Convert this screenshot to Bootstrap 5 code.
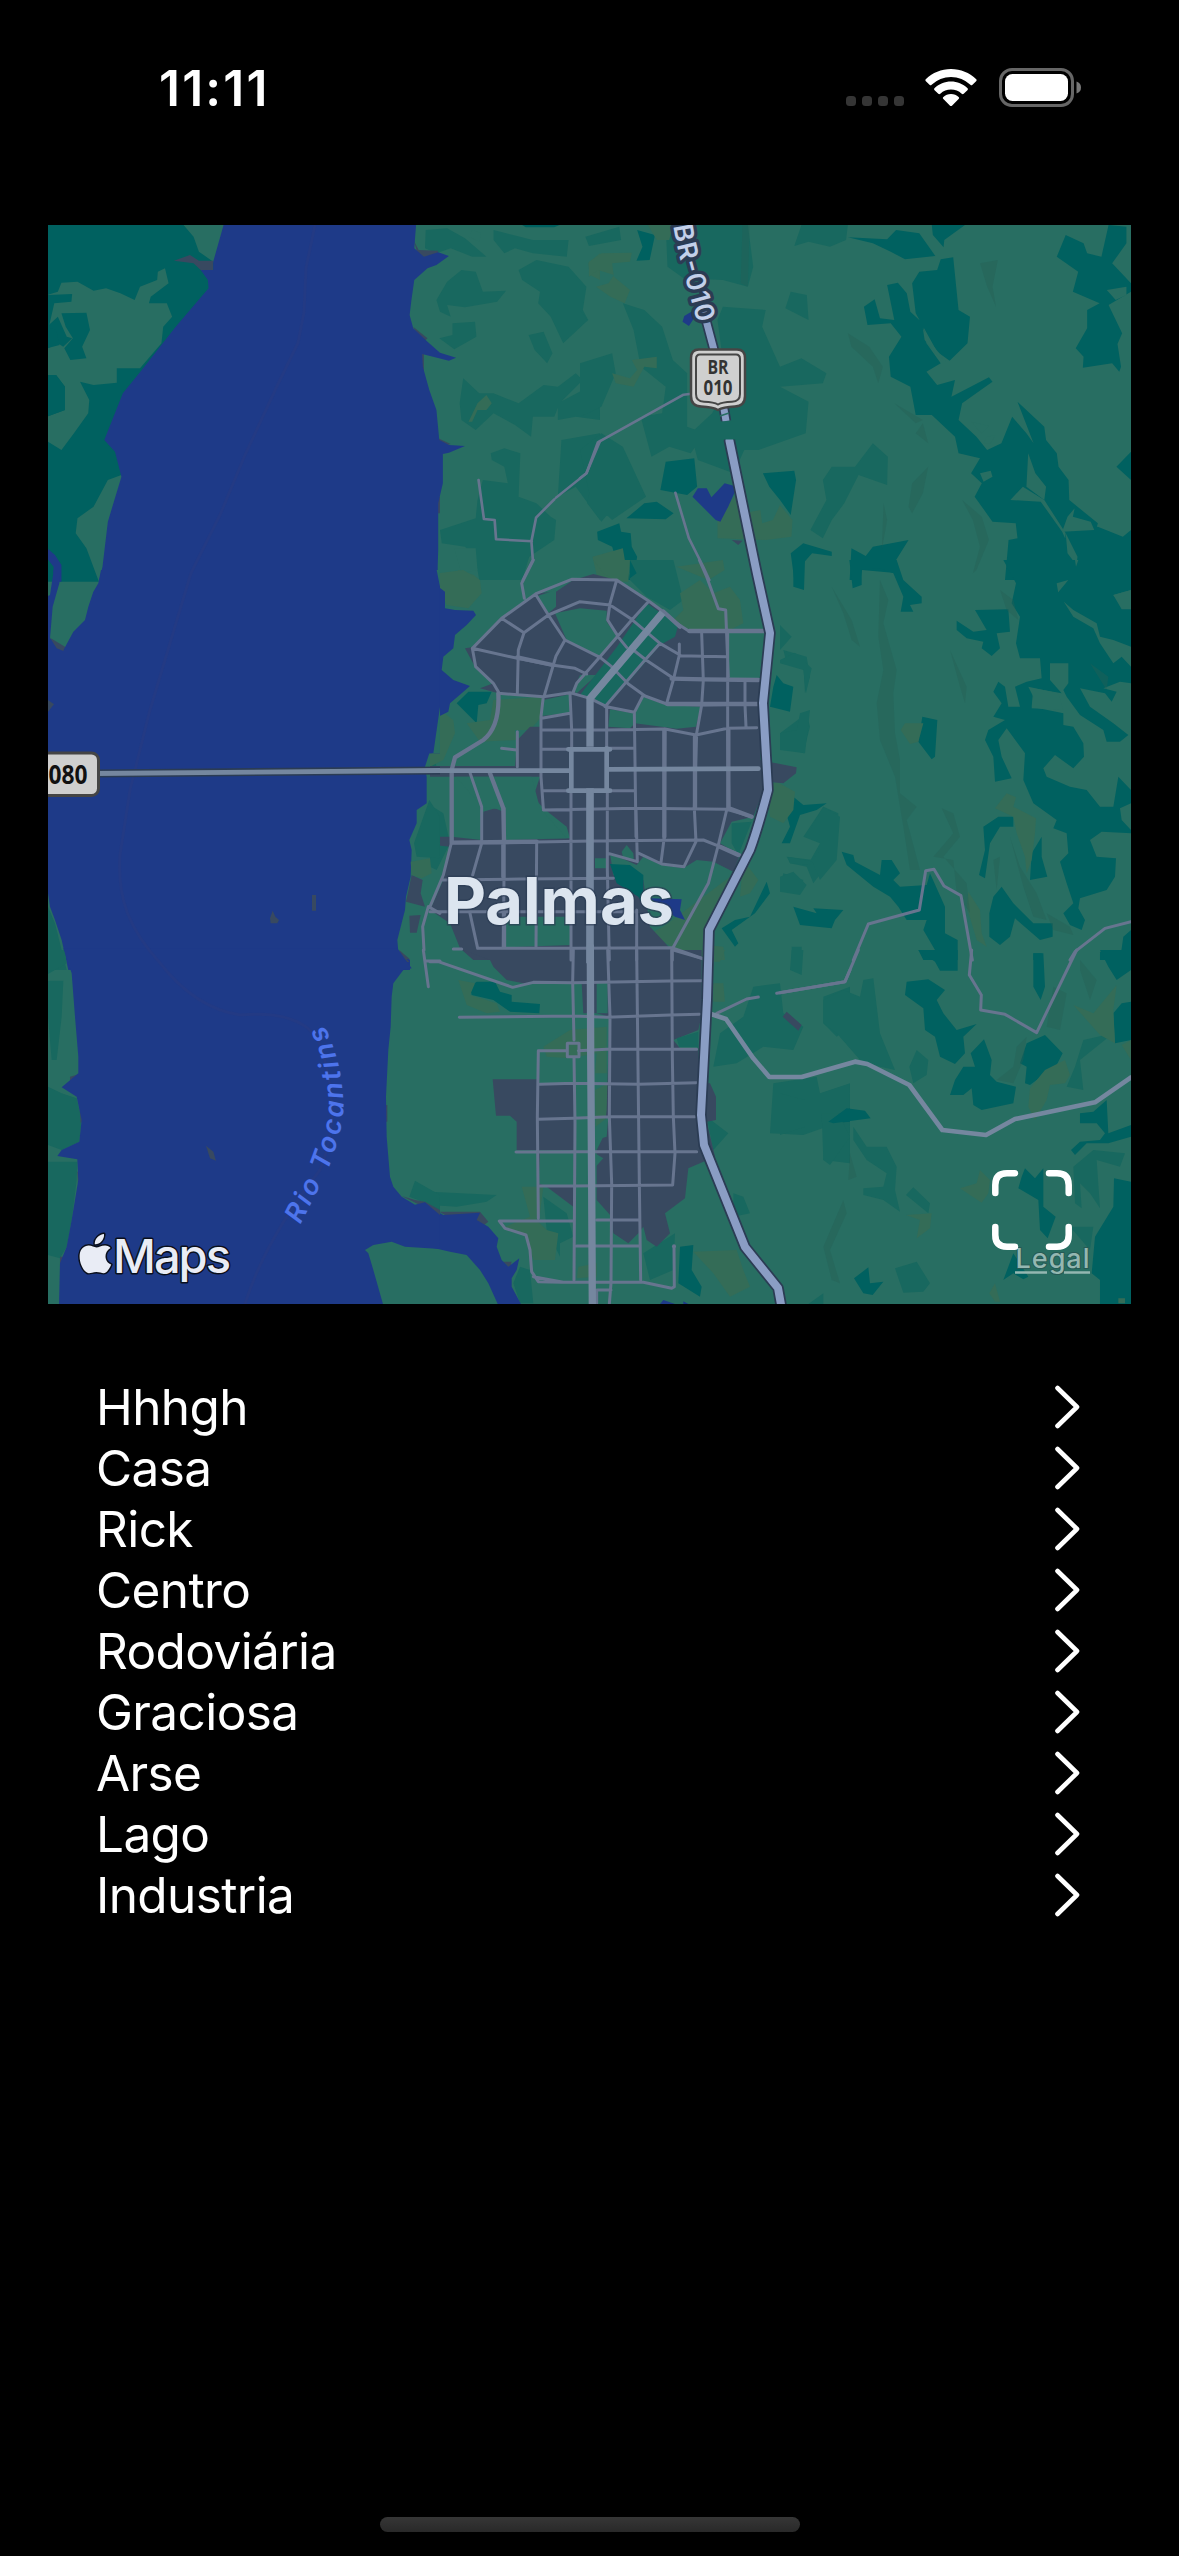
<!DOCTYPE html>
<html lang="pt-BR" data-bs-theme="dark">
<head>
<meta charset="utf-8">
<meta name="viewport" content="width=device-width, initial-scale=1">
<title>Palmas</title>
<link href="https://cdn.jsdelivr.net/npm/bootstrap@5.3.0/dist/css/bootstrap.min.css" rel="stylesheet">
<style>
  body{background:#000;color:#fff;font-family:Inter,"Liberation Sans",sans-serif}
  .screen{width:1179px;height:2556px;overflow:hidden}
  .statusbar{height:225px;padding:68px 98px 0 159px}
  .clock{font-size:49.5px;font-weight:600;line-height:40px;letter-spacing:2.2px}
  .mapbox{width:1083px;height:1079px;margin-left:48px}
  .mapbox>svg{display:block}
  .expand{right:59px;bottom:54px;width:80px;height:80px}
  .places{margin-top:72.500px;padding:0 96px}
  .place{height:61px;background:transparent;color:#fff;border:0;font-size:49.5px;line-height:61px;letter-spacing:-.6px;padding:0 3px 0 0}
  .homebar{width:420px;height:15px;border-radius:8px;background:linear-gradient(#363636,#292929);margin-bottom:24px}
  .w{fill:#1e3a88}.d{fill:#006160}.m{fill:#18685f}.g{fill:#286e62}.o{fill:#346c57}.u{fill:#384960}.s{fill:#265f55;opacity:.4}
  .r,.a,.h,.hc{fill:none;stroke-linejoin:round;stroke-linecap:round}
  .r{stroke:#67758f;stroke-width:9}.a{stroke:#75879f;stroke-width:14}
  .h{stroke:#8a9dc4;stroke-width:22}.hc{stroke:#2b3c54;stroke-width:33}
  .thin{stroke-width:7.5}.fat{stroke-width:13}
</style>
</head>
<body>
<main class="screen d-flex flex-column">
  <header class="statusbar d-flex justify-content-between align-items-start">
    <div class="clock">11:11</div>
    <svg width="236" height="40" viewBox="845 68 236 40">
      <g fill="#353535"><rect x="846" y="96" width="10" height="10" rx="3.5"/><rect x="862" y="96" width="10" height="10" rx="3.5"/><rect x="878" y="96" width="10" height="10" rx="3.5"/><rect x="894" y="96" width="10" height="10" rx="3.5"/></g>
      <g fill="#fff"><path d="M951 69c9.700 0 18.500 3.800 25 10 .8.800.8 1.500.1 2.200l-3.600 3.500c-.7.700-1.400.7-2.100 0a28 28 0 0 0-38.800 0c-.7.700-1.400.7-2.100 0l-3.600-3.500c-.7-.7-.7-1.400.1-2.200 6.500-6.200 15.300-10 25-10z"/><path d="M951 81.500c6.200 0 12 2.400 16.300 6.500.8.700.8 1.500.1 2.200l-3.700 3.600c-.7.700-1.300.6-2 0a15.700 15.700 0 0 0-21.400 0c-.7.600-1.300.7-2 0l-3.700-3.600c-.7-.7-.7-1.500.1-2.200 4.300-4.100 10.100-6.500 16.300-6.500z"/><path d="M951 94c3 0 5.600 1.200 7.600 3 .7.700.7 1.300 0 2l-6.400 6.400c-.8.800-1.600.8-2.400 0L943.400 99c-.7-.7-.7-1.300 0-2 2-1.800 4.600-3 7.600-3z"/></g>
      <rect x="1000.500" y="69.500" width="72" height="36" rx="11.500" fill="none" stroke="#666" stroke-width="3"/>
      <rect x="1005" y="74" width="63" height="27" rx="7.500" fill="#fff"/><path d="M1076.500 81.500q4.500 1.500 4.500 6t-4.500 6z" fill="#777"/>
    </svg>
  </header>

  <section class="mapbox position-relative overflow-hidden flex-shrink-0">
  <svg width="1083" height="1079" viewBox="48 225 1083 1079">
    <rect class="g" x="48" y="225" width="1083" height="1079"/>
    <!-- terrain, north-west -->
    <g transform="translate(40 220) scale(.35714 .33333)">
      <path class="d" d="M0 0H390L430 50 445 95 485 125 520 205 300 500 240 700 228 765 190 780 150 860 105 895 100 940 130 985 165 1085H0V650L60 690 95 640 135 580 138 540 112 485 150 495 215 488V445H280L340 370 345 320 370 290 355 250 305 250 310 230 360 190 350 145 330 155 328 180 280 200 265 240 225 220 185 205 150 212 105 185 60 188 50 215 20 225V320L50 290 75 350 90 355 65 380 50 370 22 385V465H45L70 500V570L20 590V0Z"/>
      <path class="d" d="M20 225L90 222 88 245 40 250 25 320H10ZM60 280L130 278 140 330 118 380 130 415 85 420 68 385 92 355 72 320ZM20 320L45 330 55 375 20 385ZM20 465L45 465 70 500V570L20 590Z"/>
      <path class="m" d="M1080 30L1140 25 1190 55 1250 110 1210 110 1150 85 1110 100 1078 85ZM1110 240L1140 185 1180 150 1220 155 1240 215 1305 212 1280 245 1190 262 1140 255 1150 290 1120 275ZM1155 310L1218 305 1222 350 1160 388 1118 355 1155 345ZM1270 30L1380 60 1480 60 1475 110 1380 100 1330 85 1300 100 1270 60ZM1340 150L1390 120 1480 140 1530 200 1520 270 1535 300 1465 370 1430 290 1395 250 1400 215 1350 180ZM1368 345L1410 335 1435 400 1420 430 1385 390ZM1185 475L1230 520 1270 520 1340 550 1410 495 1450 500 1500 460 1520 480 1455 550 1440 590 1380 590 1375 650 1330 615 1270 580 1220 630 1180 600 1175 550ZM1262 700L1300 685 1345 700 1340 830 1390 850 1430 890 1445 900 1440 960 1370 1010 1350 1080 1230 1080 1220 1020 1190 980 1125 970 1120 930 1220 895 1225 840 1240 780 1310 790 1300 740 1265 720ZM1460 660L1568 640V900L1500 800 1450 830ZM1450 550L1520 510 1568 560V600L1500 590 1450 600Z"/>
      <path class="g" d="M1210 30L1235 40 1230 65 1200 50ZM1160 985L1220 985 1225 1050 1180 1060Z"/>
      <path class="o" d="M1200 605L1225 550 1250 525 1265 550 1250 570 1225 570 1210 605ZM1535 130L1568 100V180L1540 165ZM1170 1050L1215 1065 1230 1080H1175ZM1550 1010H1568V1050Z"/>
      <path class="d" d="M1350 15H1455L1440 22H1360Z"/>
    </g>
    <!-- terrain, north-east -->
    <g transform="translate(580 220) scale(.35714 .33333)">
      <path class="m" d="M15 50L110 20 115 60 25 78ZM240 15H470L485 140 470 200 400 180 290 175 245 140ZM620 15H750L745 60 700 80 640 65 600 78ZM590 215L635 225 640 300 575 265ZM120 250L180 270 230 320 260 420 300 460V620L350 640 310 700 250 680 200 710 170 590 230 580 240 500 170 440 150 330ZM400 260L520 270 510 320 560 440 620 415 690 460 680 490 560 500 640 545 632 640 500 690 460 690 430 760 330 720 310 640 370 580 410 500 385 300ZM0 430L90 400 100 460 60 560 0 590ZM0 690L60 640 120 680 185 830 90 900 30 840ZM820 670L862 710 860 795 780 765 740 850 705 900 680 955 645 930 690 840 680 780 705 740 770 740ZM0 270L20 300H0ZM30 800L80 880 60 905 20 850Z"/>
      <path class="d" d="M160 30L210 45 195 120 158 122 175 80ZM750 52L860 58 885 30 950 40 995 108 910 118 870 95 820 70ZM985 15H1078L1020 60 1018 82 988 45ZM1010 118L1045 112 1060 270 1092 290 1085 370 1035 422 1000 395 940 280 930 190 950 155 1000 150ZM860 195L890 188 915 220 925 275 960 310 970 370 1010 430 970 455 1000 495 1050 480 1040 530 1145 472 1155 485 1070 550 1060 600 1110 650 1140 690 1180 670 1210 590 1250 640 1270 670 1225 545 1300 620 1305 660 1335 700 1340 740 1368 780 1370 840 1450 910 1445 930 1360 940 1300 840 1240 800 1205 840 1290 845 1350 935 1390 1030 1385 1080H1190L1200 960 1225 955 1220 910 1155 905 1105 830 1125 790 1095 760 1120 715 1060 700 1050 650 985 585H940L925 500 870 470 865 410 900 350 870 310 805 315 795 260 825 238 840 295 880 300ZM1360 45L1410 70 1420 100 1460 110 1480 15 1530 20 1530 70 1490 130 1543 190V215L1480 255 1518 340 1505 372 1515 440 1510 455 1490 430 1408 443 1410 410 1388 385 1420 325V270L1455 250 1380 215 1395 155 1335 110ZM240 725L320 715 328 800 300 825 225 810ZM130 895L180 850 215 845 262 880 240 898ZM512 760L600 752 605 780 590 885 560 840 530 800ZM48 935L110 910 115 935 142 940 145 980 160 1010 150 1080H120L90 980 50 960ZM590 1000L625 970 705 995V1008L650 1000 625 1030 625 1080H600ZM760 985L800 1008 820 980 920 960 885 1020 890 1060 790 1050 785 1080H755ZM1360 935L1450 920 1520 950 1543 930V1080H1350ZM1543 695L1502 740 1543 780Z"/>
      <path class="g" d="M1365 890L1385 865 1380 890 1430 905 1440 930 1350 935ZM1255 700L1275 760 1305 800 1300 840 1250 800ZM1475 210L1530 200 1530 225 1500 240ZM960 325L980 365 1025 425 1000 405 965 360ZM1120 760L1150 752 1155 770 1130 785ZM1360 940L1393 1010 1390 1035 1365 1000ZM1095 605L1145 618 1125 640ZM1140 650L1163 645 1150 670 1130 670Z"/>
      <path class="o" d="M190 15H260L250 60 215 60ZM25 125L60 100 145 98 140 125 90 130 95 170 140 210 125 250 85 230 45 200 80 190 95 165 50 150 25 170ZM145 420L215 410 215 445 180 440 150 500 100 490 90 460 140 475 160 450ZM440 820L455 880 505 870 510 910 540 900 560 855 595 900 592 950 520 960 385 955 385 890ZM35 1010L120 985 135 1080H50ZM270 1040L400 1020 405 1050 360 1080Z"/>
      <path class="w" d="M320 270L322 290 305 318 287 305 292 288ZM315 830L330 805 355 805 368 832 405 790 440 800 415 860 393 905 380 900Z"/>
      <path class="u" d="M425 960L455 962 443 975Z"/>
      <path class="s" d="M750 340L810 380 848 440 835 490 820 440 760 380ZM1120 130L1170 120 1155 200 1165 260 1140 200ZM880 550L960 600 940 610ZM930 790L975 740 960 820 930 880 920 860ZM1070 840L1125 890 1145 960 1110 1050 1100 1060 1120 980 1100 900ZM960 610L975 670 940 640ZM850 850L860 900 845 990ZM455 15H475L470 200 450 190Z"/>
    </g>
    <!-- terrain around the city -->
    <g transform="translate(430 560) scale(.33333)">
      <path class="m" d="M590 0H730L745 60 760 120 720 150 650 110 600 60ZM330 110L400 90 380 140 350 150ZM1060 270L1130 290 1140 350 1125 400 1120 310 1070 310ZM1050 520L1130 460 1140 500 1120 580 1060 560ZM1180 740L1225 760 1220 860 1180 930 1150 970 1130 920 1170 850 1120 830ZM0 735L40 760 60 850 20 930 0 920ZM1070 890L1150 900 1130 920 1080 910ZM1060 940L1120 960 1110 1000 1050 990ZM0 560L20 620H0Z"/>
      <path class="d" d="M600 0L620 40 600 55ZM1090 0H1125L1122 90 1090 80ZM1040 345L1060 370 1090 380 1080 455 1020 440 1030 380ZM80 430L115 395 185 395 170 430 145 435 140 490ZM1065 745L1090 710 1120 735 1190 730 1160 750 1110 765 1080 850 1055 850 1080 800ZM875 1105L915 1080 960 1070 1010 965 1020 1000 975 1060 905 1110 925 1150 915 1160ZM1090 1040L1160 1060 1150 1045 1240 1050 1215 1080 1205 1105 1110 1095Z"/>
      <path class="o" d="M490 0H600L595 65 560 65 520 40ZM25 40L100 30 150 60 155 100 115 145 50 135 30 95ZM750 100L810 60 850 100 900 80 930 120 940 190 900 210 770 210 730 180 760 150ZM190 420L340 410 335 470 300 510 255 510 260 540 150 545 110 490 180 480ZM30 450L70 480 75 520 40 600 0 620V560L20 480ZM1010 680L1040 665 1095 695 1090 750 1060 790 1020 770ZM940 900L985 960 960 1000 930 1010ZM700 1100L900 950 830 1100 820 1200 730 1165 660 1120ZM830 1155L880 1160 885 1200H840Z"/>
      <path class="u" d="M320 100L378 95 430 60 490 42 560 60 700 150 775 212 890 212 898 355H990V600L1100 622 1098 640 1060 670 1010 665 970 770 905 785 870 850 930 885 910 935 850 905 800 900 760 925 695 915 640 890 620 915 540 880 550 945 640 960 660 1100 720 1165 830 1200H130L90 1165 60 1090 0 1050 40 960 60 860 12 855 15 830 65 830 155 840 160 755 195 745 220 755 225 840 420 835 410 800 340 745 310 710 330 650H0V618H255L262 540 300 500H330L340 410 205 400 150 385 190 370 135 320 105 265 125 262 210 175Z"/>
      <path class="d" d="M540 912L600 915 640 945 640 1035 625 1010 560 970Z"/>
      <path class="g" d="M322 108L378 90 378 140 355 160ZM375 160L450 145 530 152 530 185 565 235 510 290 410 240ZM340 420L420 403 425 458 335 468ZM540 448L612 460 640 410 705 434 812 440 798 500 740 506 615 490 600 505 535 500ZM78 650H305L330 745 410 835H232L222 750 155 740ZM228 1070H425V1155L228 1162ZM495 895H530V925H495ZM575 875L590 855 610 880 612 905 580 895ZM450 345L500 345 440 400 430 390Z"/>
      <path class="m" d="M650 130L745 195 735 230 690 255 600 360 530 438 480 410 450 405 560 262ZM905 790L965 785 925 885 905 850Z"/>
      <path class="w" d="M-5 0H20L25 80 45 95V145L75 150 130 152 138 165 110 195 75 225 70 265 40 290 35 330 70 360 120 378 95 400 60 430 55 455 25 470 15 500 10 550 5 580H-5ZM660 1015L755 1018 750 1050 765 1080 735 1070Z"/>
    </g>
    <!-- terrain, east -->
    <g transform="translate(780 560) scale(.33333)">
      <path class="d" d="M208 0H350L370 60 425 110 425 130 390 135 400 155H362L370 110 340 40 300 25 245 30V75L218 85ZM670 0H1053V90L1000 105 1030 145 1053 145V260L1000 240 960 230 950 190 880 150 828 105 865 60 830 70 835 100 880 170 940 205 960 250 1000 310 1025 290 1053 320V370L1020 365 970 385 1010 395 995 425 975 400 900 385 930 440 1000 490 1045 525 1020 545H980L970 510 900 465 860 410 850 390 865 370V310H810V360L845 400 760 385 755 440 850 460V495L880 500 910 550 912 590 880 625 825 585 790 625 800 650 870 680 920 690 960 740 1000 740 1015 650 1053 690V730L1020 745 1025 780 1053 810V820L965 815 930 840 950 890 1008 895 1005 950 980 990 900 1015 895 1045 915 1080 905 1110 870 1095 850 1060 880 1030 860 970 840 905 865 880 860 820 820 805 830 780 760 730 730 660 735 580 680 505 655 540 665 590 695 655 645 665 640 590 615 540 625 510 675 480 640 470 665 430 640 395 655 365 675 380 685 440 720 440 705 380 740 365 785 355 780 295 720 295 708 250 720 170 695 130 708 70ZM585 150L685 148 690 215 650 220 660 265 635 288 605 265 610 245 560 235 530 210V182L580 215 620 210ZM427 470L472 480 465 590 455 598 415 545ZM610 800L655 770H700V800H660L630 850 615 955 597 945 615 870ZM785 830V890L802 950 750 960 755 880ZM185 875L220 885 225 905 300 945 305 900 335 900 360 940 340 960 360 980 440 975 450 940 495 1040V1120L533 1140V1200H430L415 1170 465 1170 430 1110 440 1080 380 1080 355 1040 330 1010 280 980 200 915ZM665 980L700 1030 760 1090 818 1090V1130L780 1140 705 1075 690 1130 660 1155 628 1130V1060L640 1010ZM1053 1110L1030 1130 1020 1200H1053ZM960 1175H1000V1200H960ZM760 1180H785V1200H760Z"/>
      <path class="g" d="M745 380L835 400 850 450 755 445 760 410ZM1000 105L1053 90V148H1025ZM885 0H895L888 20Z"/>
      <path class="m" d="M0 195L35 230 0 270ZM0 300L45 278 95 325 78 400 70 330 0 310ZM60 460L90 450 75 580 0 570V520L50 510ZM130 740L180 770 170 900 120 960 95 900 150 840 90 810ZM0 950L40 935 80 975 60 1005 0 995ZM35 1160H65V1200H35ZM25 890L100 905 90 915 30 910Z"/>
      <path class="o" d="M362 510L375 490 430 490 415 545 390 552ZM645 745L680 700 708 712 700 740 768 775 765 820 755 900 740 940 735 890 710 820 700 770ZM565 995L600 1050 605 1120 620 1160 590 1140 560 1040Z"/>
      <path class="s" d="M155 80L215 180 240 260 215 240 190 160ZM300 60L325 120 310 190 350 330 340 400 345 520 360 600 360 700 410 740 380 780 420 930 390 930 370 800 345 650 300 540 290 430 310 330 295 230ZM510 270L560 380 555 430 540 380ZM485 745L520 760 540 830 490 890 560 970 570 1060 530 1000 520 900 460 890 520 820ZM660 90L700 120 715 180 680 150ZM690 830L720 920 770 1000 800 1080 760 1070 730 980ZM930 310L985 350 980 390ZM800 1060L870 1100 880 1125 820 1110ZM640 900L660 890 650 990Z"/>
    </g>
    <!-- terrain, south -->
    <g transform="translate(430 950) scale(.33333)">
      <path class="m" d="M0 725L200 735 170 755 80 770 0 765ZM340 740L410 790 430 860 390 880 390 920 350 840ZM250 1000L270 950 300 960 310 1060H270ZM640 910L735 850 730 960 660 990ZM970 110L1050 100 1060 190 1120 230 1090 300 1000 290 920 340 850 350 870 250 940 200ZM1180 140L1260 110V230L1220 260 1180 220ZM1030 400L1160 380 1170 430 1260 400V640L1180 630 1190 530 1120 555 1020 550ZM830 500L895 550 850 600ZM910 730L940 740 960 790 910 800ZM1085 0H1120L1115 75 1080 60Z"/>
      <path class="d" d="M120 110L140 95H195L210 125 245 135V155L330 162 328 190 240 185 190 150 125 135ZM750 890L790 885 785 960 815 1010 810 1040 745 1000ZM1195 510L1260 475V515L1210 520Z"/>
      <path class="o" d="M85 90L135 100 120 135 200 160 210 185 170 190 110 165ZM340 290L420 240 530 230V370L495 370 500 310 420 325 350 320ZM495 420L535 400 530 520 497 530ZM275 710L340 710 330 790 320 810 350 840 385 850 375 930 310 930 290 860 225 830 300 800ZM790 905L920 900 940 960 960 1010 900 1040 850 970ZM850 100L880 100 885 155 850 155ZM740 0H810V25ZM850 0H885L870 35H850ZM445 950L500 940V980L440 985Z"/>
      <path class="u" d="M100 0H815V195L805 240 730 270 750 295H805V400L840 400 858 440V510L830 515 855 620 775 655 765 745 705 790 720 850 680 890 650 870 640 830 625 850 595 880 550 850 545 800 500 750V600L520 560 530 480 538 200 500 190H460L455 100H280L230 90 190 50 180 30ZM188 388H325V400H430L440 500V600H330L325 705 430 705V770L350 710 325 700V600H260V515L240 497H198ZM1070 185L1115 225 1105 242 1058 200Z"/>
      <path class="g" d="M500 98H533V190H500ZM497 530L535 500 530 560 497 570ZM495 610L520 625 497 650ZM435 415H470V700H440Z"/>
      <path class="m" d="M740 265L805 245V292L748 292Z"/>
      <path class="u" d="M0 770L30 785 150 785 175 815 150 835 110 830ZM220 935H245L240 955Z"/>
      <path class="w" d="M-5 770L40 795 150 788 140 810 175 830 205 865 200 890 215 930 235 950 268 925 260 960 245 985V1010L275 1066H205L175 1000 150 960 110 915 60 905-5 890ZM690 1062L700 1050 735 1062ZM760 1062V1054L775 1062Z"/>
    </g>
    <g transform="translate(780 950) scale(.33333)">
      <path class="m" d="M130 150L190 120 240 140 250 90 280 85 300 250 345 360 300 350 240 330 170 250 130 220ZM410 300L445 330 440 375 400 400 388 350ZM220 530L260 590 320 590 350 650 345 720 360 785 310 750 250 735 250 715 310 710 320 670 260 630 220 570ZM125 490H175L210 560 150 645 130 630ZM378 735L400 712 450 760 445 790ZM345 955L410 935 450 1000 430 1025 370 1028ZM910 270L1000 250 900 330 910 420 860 410 885 350ZM880 650L940 600 1035 610 1020 650 950 630 960 775 930 730 900 700 905 775 885 760ZM870 830H940L930 900ZM85 1062L130 1030V1062ZM0 430L75 450V530L0 555Z"/>
      <path class="d" d="M415 0H533V62H480L465 35ZM760 10H790L795 110 782 150 760 110ZM960 0H1053V60L1010 90 985 50ZM380 95L445 88 495 120 470 150 490 190 530 240 590 222 550 260 555 310 525 342 480 320 465 260 435 240 430 175 375 135ZM612 268L635 330 630 375 650 395 708 410 700 460 605 480 580 465 575 415 550 435H510L525 390 550 350 585 350 572 310ZM740 280L795 255 848 310 830 345 750 405 735 400 740 350 720 340ZM1053 155V270L1005 280 1000 190 1025 160ZM145 515L200 475 255 482 272 505 160 520ZM900 490L940 485 980 450 985 550 1053 525V560L985 580 920 580 885 615 873 600 900 575 960 570 975 550 950 520 900 520ZM735 655L765 685 790 655V770L827 800 803 865 780 840 775 750 715 715 725 680ZM1002 685L1053 695V1062H960V990L935 970 945 860 1000 770ZM222 985L265 952 270 1000 310 995 278 1035 250 1030ZM700 910L745 980 730 988 700 970 670 990Z"/>
      <path class="o" d="M880 165L940 190 1010 105 1000 180 1005 280 960 255ZM1053 270L1025 285 1053 330ZM795 360L855 330 870 375 855 400 810 405 800 450 765 510 745 470 750 415ZM540 715L590 700 600 660 630 690 625 730 605 758 570 735ZM378 795L455 790 450 835 410 865 420 810ZM628 1030L645 1000 660 1055H645ZM1015 1045H1035V1060H1015Z"/>
      <path class="s" d="M900 30L950 90 930 150 900 60ZM710 290L740 260 730 330 700 400 650 390 700 350ZM190 750L200 790 150 900 180 1000 155 990 130 890ZM820 110L860 130 840 240 800 230ZM210 610L230 680 205 690Z"/>
    </g>
    <!-- river -->
    <g transform="translate(40 220) scale(.35714 .33333)">
      <path class="u" d="M375 122L420 105 445 122 485 122V150L455 155 430 130ZM1046 60L1060 90 1115 92 1110 112 1060 110ZM1045 320L1085 355 1070 370ZM1058 410L1075 400V465L1065 440ZM1115 655L1150 672 1125 680ZM1112 830H1120V880H1108Z"/>
      <path class="w" d="M518 0H1054L1048 85 1075 110 1115 97 1145 108 1110 135 1085 145 1048 180 1040 240 1035 285 1045 325 1085 365 1120 398 1165 413 1145 422 1070 402 1072 440 1090 510 1110 570 1118 660 1145 675 1190 678 1145 698 1128 702V790L1115 850V990L1112 1085H165L175 1040 190 905 228 770 210 695 180 660 232 520 285 450 380 320 472 205 470 180 450 150 485 150 485 125ZM20 985L42 1005 60 1035V1085H38V1040L20 1015Z"/>
    </g>
    <g transform="translate(40 570) scale(.33333)">
      <path class="w" d="M183 0H1200V550H1168L1155 590 1160 620V700L1130 720V760L1108 810 1115 840 1112 920 1098 980 1095 1020 1072 1110 1075 1145 1110 1170V1200H85L65 1110 45 1050 30 1010 24 970V78L30 75 40 10V0H62L58 40 38 110 30 205 65 230 75 232 100 185 135 150 145 110 160 65 175 40Z"/>
      <path class="g" d="M1190 0H1200V50ZM1200 410L1180 550H1200Z"/>
      <path class="u" d="M30 203L75 230 70 243 50 235ZM24 390L42 403 24 425ZM816 975H828V1022H816ZM698 1022L706 1040 717 1050 712 1060H692L690 1045ZM1115 915L1148 930 1142 970 1155 1010 1098 995ZM1108 1037L1142 1035 1130 1088H1110ZM1078 1140L1110 1168H1080Z"/>
      <path class="m" d="M24 1010L45 1060 80 1200H24ZM1168 690L1200 740V865L1130 860 1122 820Z"/><path class="o" d="M1112 875L1170 865 1175 910 1145 925 1115 915Z"/>
    </g>
    <g transform="translate(40 950) scale(.33333)">
      <path class="m" d="M24 0H75L80 40 24 72ZM24 92H70L65 200 50 330H35L24 200ZM24 410L65 430 110 445 125 510 118 575 65 600 24 585ZM24 635H112L110 690 95 810 80 890 60 925 24 915ZM1125 692L1200 735V790L1155 758 1108 740Z"/>
      <path class="u" d="M90 380L118 372 112 385 90 400ZM118 460L130 510 122 520ZM112 665H118L115 720ZM60 920H75L60 1000ZM1035 465H1042V515H1035ZM1085 738L1125 750 1155 755 1200 780V800L1150 770ZM1072 0L1108 35 1090 40Z"/>
      <path class="w" d="M70-5H1072L1115 55 1090 60 1060 100 1055 140 1052 230 1045 300 1038 440 1040 560 1050 680 1060 710 1085 740 1125 764 1155 757 1200 795V897L1095 890 1055 875 1000 885 975 900 985 910 1000 960 1030 1066H57L60 940 80 890 95 810 115 690 112 628 52 618 65 600 118 575 125 510 110 440 65 412 115 370V320L105 200 95 70Z"/>
      <path class="u" d="M498 587L520 605 528 632 510 625Z"/>
    </g>
    <path d="M315 225L306 268 304 312 298 343 278 384 245 455 220 515 191 573 150 710 130 790 120 855C117 900 130 930 160 963Q195 1008 240 1015 300 1010 318 1040 345 1110 320 1170 265 1240 245 1304" fill="none" stroke="#233a84" stroke-width="3"/>

    <!-- minor roads -->
    <g transform="translate(40 220) scale(.35714 .33333)"><path class="r thin" d="M1228 780L1243 897 1273 900 1277 958 1377 964M1568 663L1530 760 1445 833M1440 838L1389 893 1376 964 1380 1020 1352 1080"/></g>
    <g transform="translate(580 220) scale(.35714 .33333)"><path class="r thin" d="M0 775L18 760 50 667 290 524 312 521M267 818L305 955 345 1040 362 1080"/></g>
    <g transform="translate(430 560) scale(.33333)">
      <path class="r" d="M310 0L275 70 283 115M808 0L830 50 865 146 887 150 895 350M320 100L425 58 560 60 655 122 700 155 740 190 775 212M320 100L215 175 127 265 137 320 190 370 205 395M127 265L262 295 365 315 435 325 470 342M215 175L282 218 265 270 262 400M318 105L355 165 405 240 510 292 545 320M355 165L450 125 540 135 605 178 690 250 750 285M282 218L355 165M405 240L378 288 342 410M560 60L540 130 533 180 568 235 590 262M655 125L605 180 510 290 440 370 428 400M205 400L340 410 420 398 480 415 530 440 613 457 640 405M545 320L595 372 645 408 710 432 815 435 985 432M690 250L645 300 525 440M610 270L648 300 730 355 820 358 990 360M748 252V285L730 360 710 430M748 287L890 290M815 220L820 360 815 435 800 520 793 745M893 210V505L897 745M945 365V435L948 500M340 410L333 470 333 650 340 745M420 400L425 510V565M335 475L420 460M335 510L530 510 705 507 798 525 893 505 980 503M530 440V565M613 457L618 830M335 568H420M530 565H612M705 507L703 830M338 692H420M530 692H612M340 750L620 745 890 748 965 770M423 695V1200M532 695V930L538 1200M890 750L865 855 835 970 728 1165M215 565L260 570M262 515V620M120 638L155 740V850L128 945M320 850L318 1165M65 848H220L530 842 820 840 870 860 930 885M618 745L622 905 535 880M622 878L695 912 762 920 798 845 793 745M703 830L693 908M222 745V950L220 1160M40 960L270 957 550 955M0 1055L40 1055H430L620 1055M65 640V845L40 945 0 1040M120 1060L143 1165 430 1165 725 1163 830 1200M70 1167H95M620 1050V1200M727 1165V1200"/>
      <path class="r fat" d="M205 400Q210 500 160 540L75 592 65 630M180 640L220 745 222 840M778 213H1005M65 640V845M262 292L368 315M220 850V950M700 155L750 200M703 510V830M795 530V745M895 510V745M725 356L820 358 985 360M712 432H985M65 848L320 845M897 745L965 770M870 860L925 885M222 1060V1160"/>
    </g>
    <g transform="translate(780 560) scale(.33333)"><path class="r" d="M220 1200L265 1092 418 1050 437 932 462 928 492 978 543 1007 577 1200M870 1200L885 1175 975 1105 1053 1085"/></g>
    <g transform="translate(430 950) scale(.33333)">
      <path class="r" d="M0 35H25L248 112 310 97 430 98 720 93 815 92M88 202L430 198 530 202 720 195 808 193M430 0L428 95 432 270M533 0L540 200 538 500 545 700 543 1000 538 1062M620 0L628 700 632 990M725 0L727 320 730 500 735 610 728 705M730 0L815 25M325 302H410M445 302L530 298 800 298M325 302L322 500 325 805M412 280H447V320H412ZM330 403L430 400 625 403 798 398M325 508L430 505 540 500 795 500M258 606L430 605 800 605M330 708L430 708 728 705M432 320L435 520 432 990M208 813H430M500 810H628M208 813L225 835 288 855 300 900 305 965 325 995 395 997M440 888L628 888M310 980L400 997H640L725 1015 733 1010 732 890M500 1062V1020H543M860 190L950 147 985 141M1040 130L1245 95 1260 60"/>
      <circle cx="732" cy="889" r="6" fill="#67758f"/>
    </g>
    <g transform="translate(780 950) scale(.33333)"><path class="r" d="M0 128L195 95 235 0M575 0L568 75 604 135 602 180 675 193 770 248 890 0"/></g>
    <g transform="translate(40 950) scale(.33333)"><path class="r" d="M1150 0L1165 110M1155 33H1200M1200-110L1165-130 1148-70 1152 0"/></g>
    <!-- avenues -->
    <g transform="translate(430 560) scale(.33333)">
      <path class="a" d="M0 632H420M535 628L985 626"/>
      <path class="a" d="M698 158L480 415V560" style="stroke-width:22;stroke-linecap:butt"/>
      <path class="a" d="M415 568H540M530 565V692M540 692H415M424 692V568"/>
      <path class="a" d="M480 685V1210" style="stroke-width:23;stroke-linecap:butt"/>
    </g>
    <path d="M95 773.500L440 770.500" stroke="#2b3c54" stroke-width="8"/><path d="M95 773.500L440 770.500" stroke="#75879f" stroke-width="4.800"/>
    <g transform="translate(430 950) scale(.33333)">
      <path class="a" d="M481-10L482 300 485 700 487 1066" style="stroke-width:22"/>
      <path class="a" d="M845 193L888 207 970 325 1018 381H1115L1275 335 1312 342 1438 405 1537 540 1668 555 1755 507 1995 457 2103 382"/>
    </g>
    <!-- highway -->
    <path class="hc" style="stroke-width:11.500" d="M729.5 441L757 574 770 633 763 703 768 790Q758 828 750 850L709 930 707 1000 701 1115 704 1145 745 1247 778 1288 782 1310"/>
    <path class="h" style="stroke-width:8" d="M729.5 441L757 574 770 633 763 703 768 790Q758 828 750 850L709 930 707 1000 701 1115 704 1145 745 1247 778 1288 782 1310"/>
    <path class="hc" style="stroke-width:10.500;stroke-linecap:butt" d="M702 305L714 350 726 421"/><path class="h" style="stroke-width:7;stroke-linecap:butt" d="M702 305L714 350 726 421"/>
    <path d="M720 416L729 413" stroke="#286e62" stroke-width="1.500"/>
    <rect class="m" x="719" y="421.500" width="16" height="18"/>

    <!-- route shields -->
    <path d="M699 349.500H737Q745 349.500 745 358V396Q745 406 735 406.500 723 407 718 410 713 407 701 406.500 691 406 691 396V358Q691 349.500 699 349.500Z" fill="#cfcfcf" stroke="#454545" stroke-width="2.500"/>
    <path d="M700 354.500H736Q740 354.500 740 359V394Q740 401.500 732 401.700 722 402 718 404.500 714 402 704 401.700 696 401.500 696 394V359Q696 354.500 700 354.500Z" fill="none" stroke="#454545" stroke-width="2"/>
    <g font-family="Open Sans,sans-serif" font-weight="700" fill="#333">
      <text x="707.500" y="373.500" font-size="19" textLength="21" lengthAdjust="spacingAndGlyphs">BR</text>
      <text x="703.500" y="395" font-size="21" textLength="29" lengthAdjust="spacingAndGlyphs">010</text>
      <rect x="10" y="753" width="88.500" height="42.500" rx="7" fill="#cfcfcf" stroke="#454545" stroke-width="3"/>
      <text x="48.500" y="783.500" font-size="26.500" textLength="39" lengthAdjust="spacingAndGlyphs" fill="#111">080</text>
    </g>
    <!-- labels -->
    <path id="br" d="M673.500 226Q677 250 685 277L701 336" fill="none"/>
    <text font-family="Inter,sans-serif" font-size="26.500" font-weight="600" fill="#c3d0ea" stroke="#2b3c54" stroke-width="7" stroke-linejoin="round" paint-order="stroke"><textPath href="#br" textLength="100">BR-010</textPath></text>
    <path id="rio" d="M300 1225C313 1200 322 1183 329 1167C341 1135 345 1115 343 1095C341 1070 335 1042 318 1014" fill="none"/>
    <text font-family="Inter,sans-serif" font-size="27" font-weight="600" font-style="italic" fill="#4d74ec"><textPath href="#rio" textLength="212">Rio Tocantins</textPath></text>
    <text x="444" y="924" font-family="Inter,sans-serif" font-size="65" font-weight="700" fill="#dce5ef" stroke="#2b3c54" stroke-opacity=".65" stroke-width="3" paint-order="stroke" textLength="230">Palmas</text>
    <g fill="#e9ecf5" stroke="#0a0f1c" stroke-width="3" stroke-linejoin="round" paint-order="stroke">
      <path d="M104 1234c.3 3-.9 5.600-2.700 7.400-1.600 1.800-4 3-6.500 2.800-.3-2.600.9-5.300 2.600-7 1.700-1.800 4.500-3.100 6.600-3.200zM110.500 1248c-3.500 2.200-5 5-5 8.200 0 3.900 2.300 7 5.700 8.400-1 3-3.300 6.400-5.400 7.900-2.800 1.700-5-.6-9.500-.6s-6.600 2.300-9.400.7c-4.600-3-7.900-11.300-7.200-18 .6-5.500 4.400-9 9-9 3.200 0 5.400 1.900 7.700 1.900s4.700-2 8.700-2c2.200.1 4.500 1.100 5.400 2.500z"/>
      <text x="113" y="1272.500" font-family="Inter,sans-serif" font-size="47" font-weight="500" textLength="118">Maps</text>
    </g>
    <text x="1015.500" y="1268" font-family="Inter,sans-serif" font-size="27" font-weight="500" fill="#94b7b1" stroke="#265a55" stroke-width="2" paint-order="stroke" textLength="74">Legal</text>
    <path d="M1015 1272.500H1047M1064 1272.500H1090" stroke="#94b7b1" stroke-width="2.500"/>
  </svg>
  <button class="expand btn p-0 border-0 position-absolute d-flex" aria-label="Expandir">
    <svg width="80" height="80" viewBox="0 0 80 80" fill="none" stroke="#fff" stroke-width="6.500" stroke-linecap="round"><path d="M3.300 23V15Q3.300 3.300 15 3.300H23M57 3.300H65Q76.700 3.300 76.700 15V23M76.700 57V65Q76.700 76.700 65 76.700H57M23 76.700H15Q3.300 76.700 3.300 65V57"/></svg>
  </button>
  </section>

  <svg class="d-none"><symbol id="chev" viewBox="0 0 25 44"><path d="M2.500 3L22 22 2.500 41" fill="none" stroke="#fff" stroke-width="4.600" stroke-linecap="round" stroke-linejoin="round"/></symbol></svg>
  <div class="places list-group list-group-flush">
    <a class="place list-group-item d-flex justify-content-between align-items-center">Hhhgh<svg width="25" height="44"><use href="#chev"/></svg></a>
    <a class="place list-group-item d-flex justify-content-between align-items-center">Casa<svg width="25" height="44"><use href="#chev"/></svg></a>
    <a class="place list-group-item d-flex justify-content-between align-items-center">Rick<svg width="25" height="44"><use href="#chev"/></svg></a>
    <a class="place list-group-item d-flex justify-content-between align-items-center">Centro<svg width="25" height="44"><use href="#chev"/></svg></a>
    <a class="place list-group-item d-flex justify-content-between align-items-center">Rodoviária<svg width="25" height="44"><use href="#chev"/></svg></a>
    <a class="place list-group-item d-flex justify-content-between align-items-center">Graciosa<svg width="25" height="44"><use href="#chev"/></svg></a>
    <a class="place list-group-item d-flex justify-content-between align-items-center">Arse<svg width="25" height="44"><use href="#chev"/></svg></a>
    <a class="place list-group-item d-flex justify-content-between align-items-center">Lago<svg width="25" height="44"><use href="#chev"/></svg></a>
    <a class="place list-group-item d-flex justify-content-between align-items-center">Industria<svg width="25" height="44"><use href="#chev"/></svg></a>
  </div>
  <div class="homebar mt-auto mx-auto"></div>
</main>
<script src="https://cdn.jsdelivr.net/npm/bootstrap@5.3.0/dist/js/bootstrap.bundle.min.js"></script>
</body>
</html>
